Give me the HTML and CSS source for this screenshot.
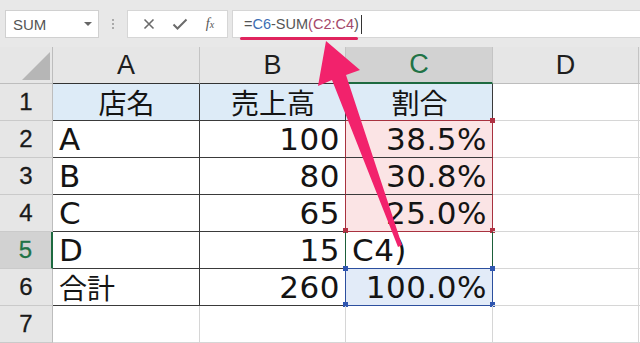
FILE: index.html
```html
<!DOCTYPE html>
<html>
<head>
  <meta charset="utf-8">
  <title>Excel - SUM</title>
  <link rel="stylesheet" href="styles.css">
</head>
<body>

<div class="app">

  <!-- Formula bar -->
  <div class="toolbar">
    <div class="namebox">
      <span>SUM</span>
      <span class="drop"></span>
    </div>
    <div class="grip"><i></i><i></i><i></i></div>
    <div class="btns">
      <svg width="12" height="12" viewBox="0 0 12 12"><path d="M1.5 1.5 L10.5 10.5 M10.5 1.5 L1.5 10.5" stroke="#6b6b6b" stroke-width="1.6" fill="none"/></svg>
      <svg width="16" height="12" viewBox="0 0 16 12"><path d="M1.5 6.5 L5.5 10.5 L14.5 1.5" stroke="#6b6b6b" stroke-width="2" fill="none"/></svg>
      <span class="fx">f<sub>x</sub></span>
    </div>
    <div class="formula">
      <span class="f-eq">=</span><span class="f-blue">C6</span>-SUM<span class="f-red">(C2:C4</span>)<span class="caret"></span>
    </div>
  </div>

  <!-- Sheet grid -->
  <div class="sheet">
    <div class="corner"><span class="tri"></span></div>
    <div class="colhead hd">A</div>
    <div class="colhead hd">B</div>
    <div class="colhead sel">C</div>
    <div class="colhead">D</div>
    <div class="colhead"></div>

    <div class="rowhead">1</div>
    <div class="cell t title jp">店名</div>
    <div class="cell t title jp">売上高</div>
    <div class="cell t title jp red-b">割合</div>
    <div class="cell"></div>
    <div class="cell"></div>

    <div class="rowhead">2</div>
    <div class="cell t">A</div>
    <div class="cell t num red-r">100</div>
    <div class="cell t num pink red-r"><i class="h red tr"></i>38.5%</div>
    <div class="cell"></div>
    <div class="cell"></div>

    <div class="rowhead">3</div>
    <div class="cell t">B</div>
    <div class="cell t num red-r">80</div>
    <div class="cell t num pink red-r">30.8%</div>
    <div class="cell"></div>
    <div class="cell"></div>

    <div class="rowhead">4</div>
    <div class="cell t">C</div>
    <div class="cell t num red-r">65</div>
    <div class="cell t num pink red-r red-b"><i class="h red bl"></i><i class="h red br"></i>25.0%</div>
    <div class="cell"></div>
    <div class="cell"></div>

    <div class="rowhead active">5</div>
    <div class="cell t">D</div>
    <div class="cell t num green-r">15</div>
    <div class="cell t edit green-r blue-b">C4)</div>
    <div class="cell"></div>
    <div class="cell"></div>

    <div class="rowhead">6</div>
    <div class="cell t jp">合計</div>
    <div class="cell t num blue-r">260</div>
    <div class="cell t num sky blue-r blue-b"><i class="h blue tl"></i><i class="h blue tr"></i><i class="h blue bl"></i><i class="h blue br"></i>100.0%</div>
    <div class="cell"></div>
    <div class="cell"></div>

    <div class="rowhead">7</div>
    <div class="cell"></div>
    <div class="cell"></div>
    <div class="cell"></div>
    <div class="cell"></div>
    <div class="cell"></div>
  </div>

  <!-- Annotation overlays -->
  <div class="underline"></div>
  <svg class="arrow" width="640" height="343" viewBox="0 0 640 343">
    <polygon points="326,41 360,70 346,75 402,245 398,247 332,80 318,86" fill="#f2226c"/>
  </svg>
</div>

</body>
</html>
```

FILE: styles.css
```css
body {
  margin: 0;
  background: #fff;
  font-family: "Liberation Sans", Arial, sans-serif;
}

.app {
  position: relative;
  width: 640px;
  height: 343px;
  overflow: hidden;
}

/* Formula bar */
.toolbar {
  height: 47px;
  box-sizing: border-box;
  background: #e8e8e8;
  display: flex;
  align-items: flex-start;
  padding: 10px 0 0 5px;
}

.namebox {
  width: 94px;
  height: 28px;
  box-sizing: border-box;
  background: #fff;
  border: 1px solid #d0d0d0;
  display: flex;
  align-items: center;
  justify-content: space-between;
  padding: 0 6px 0 7px;
  font-size: 15px;
  color: #555;
}

.drop {
  width: 0;
  height: 0;
  border-left: 4px solid transparent;
  border-right: 4px solid transparent;
  border-top: 4px solid #666;
}

.grip {
  width: 28px;
  height: 28px;
  display: flex;
  flex-direction: column;
  align-items: center;
  justify-content: center;
  gap: 2px;
}

.grip i {
  width: 2px;
  height: 2px;
  background: #aaa;
}

.btns {
  width: 101px;
  height: 28px;
  box-sizing: border-box;
  background: #fff;
  border: 1px solid #d6d6d6;
  display: flex;
  align-items: center;
  justify-content: space-around;
  padding: 0 4px 0 6px;
  margin-right: 4px;
}

.fx {
  font-family: "Liberation Serif", serif;
  font-style: italic;
  font-size: 14px;
  color: #555;
}

.fx sub {
  font-size: 10px;
  vertical-align: baseline;
}

.formula {
  flex: 1;
  height: 28px;
  box-sizing: border-box;
  background: #fff;
  border: 1px solid #d6d6d6;
  border-right: none;
  display: flex;
  align-items: center;
  padding-left: 11px;
  font-size: 14.5px;
  color: #555;
}

.f-blue { color: #3c6eb4; }
.f-red { color: #a5486a; }

.caret {
  width: 1px;
  height: 19px;
  background: #333;
  margin-left: 2px;
}

/* Sheet grid */
.sheet {
  display: grid;
  grid-template-columns: 53px 147px 146px 147px 146px 1fr;
  grid-auto-rows: 37px;
}

.sheet > div {
  box-sizing: border-box;
  border-right: 1px solid #d6d6d6;
  border-bottom: 1px solid #d6d6d6;
  display: flex;
  align-items: center;
  position: relative;
}

.corner {
  background: #e6e6e6;
  border-right-color: #bdbdbd !important;
  border-bottom-color: #bdbdbd !important;
}

.tri {
  position: absolute;
  right: 2px;
  bottom: 3px;
  width: 0;
  height: 0;
  border-left: 28px solid transparent;
  border-bottom: 28px solid #b6b6b6;
}

.colhead {
  background: #e6e6e6;
  justify-content: center;
  font-size: 27px;
  color: #1e1e1e;
  border-right-color: #c4c4c4 !important;
  border-bottom-color: #bdbdbd !important;
}

.colhead.hd {
  border-bottom-color: #333 !important;
}

.colhead.sel {
  background: #d2d2d2;
  color: #217346;
  border-bottom: 2px solid #1d6a40 !important;
}

.rowhead {
  background: #e6e6e6;
  justify-content: center;
  font-size: 24px;
  color: #1a1a1a;
  -webkit-text-stroke: 0.3px #1a1a1a;
  border-right-color: #bdbdbd !important;
  border-bottom-color: #cacaca !important;
}

.rowhead.active {
  background: #d2d2d2;
  color: #217346;
  -webkit-text-stroke: 0.3px #217346;
  border-right: 2px solid #1d6a40 !important;
}

/* Cells */
.cell {
  padding: 0 5px 0 6px;
  font-family: "DejaVu Sans", "Noto Sans CJK JP", sans-serif;
  font-size: 31px;
  color: #141414;
  letter-spacing: 0.5px;
}

.cell.t {
  border-right-color: #3a3a3a;
  border-bottom-color: #3a3a3a;
}

.jp {
  font-family: "Noto Sans CJK JP", sans-serif;
  font-size: 28px;
  letter-spacing: 0;
}

.title {
  background: #ddebf7;
  justify-content: center;
}

.num {
  justify-content: flex-end;
}

.pink { background: #fbe4e5; }
.sky { background: #e2ebf8; }

.cell.red-r { border-right-color: #a8323f; }
.cell.red-b { border-bottom-color: #a8323f; }
.cell.green-r { border-right-color: #1d5e3a; }
.cell.blue-r { border-right-color: #2c4f9e; }
.cell.blue-b { border-bottom-color: #2c4f9e; }

/* Range handles */
.h {
  position: absolute;
  width: 5px;
  height: 5px;
}

.h.red { background: #b03042; }
.h.blue { background: #2f56b0; }
.h.tr { top: -3px; right: -3px; }
.h.tl { top: -3px; left: -3px; }
.h.br { bottom: -2px; right: -3px; }
.h.bl { bottom: -2px; left: -3px; }

/* Annotations */
.underline {
  position: absolute;
  left: 240px;
  top: 37px;
  width: 118px;
  height: 3px;
  border-radius: 2px;
  background: #e0245e;
}

.arrow {
  position: absolute;
  left: 0;
  top: 0;
  pointer-events: none;
}
```
